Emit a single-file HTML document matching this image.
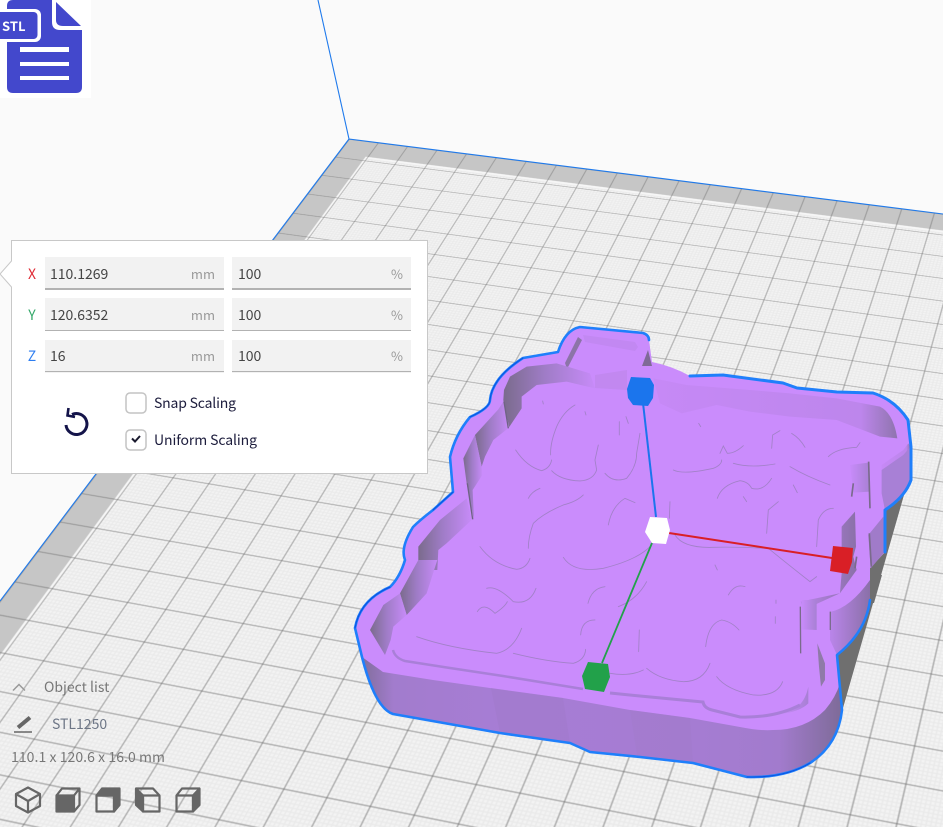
<!DOCTYPE html>
<html><head><meta charset="utf-8">
<style>
html,body{margin:0;padding:0;background:#fafafa;width:943px;height:827px;overflow:hidden;}
#v{position:relative;width:943px;height:827px;overflow:hidden;background:#fafafa;}
#plane{position:absolute;left:0;top:0;width:960px;height:900px;transform-origin:0 0;
transform:matrix3d(0.926,0.1067,0,-0.0001073,-0.5927,0.5227,0,-0.0004357,0,0,1,0,349,139,0,1);
background-color:#f3f3f3;
background-image:linear-gradient(#eaeaea 1px,transparent 1px),linear-gradient(90deg,#eaeaea 1px,transparent 1px);
background-size:3px 3px;}
.a{position:absolute;}
#b1{left:0;top:0;width:960px;height:27px;background:#f6f6f6;}
#b2{left:0;top:0;width:31px;height:900px;background:#f6f6f6;}
#s1{left:0;top:0;width:960px;height:24px;background:#c6c6c6;}
#s2{left:0;top:0;width:28px;height:900px;background:#c6c6c6;}
#g{left:0;top:0;width:960px;height:900px;
background-image:linear-gradient(rgba(110,110,110,.5) 1.3px,transparent 1.3px),linear-gradient(90deg,rgba(110,110,110,.5) 1.3px,transparent 1.3px);
background-size:30px 30px;}
svg{position:absolute;left:0;top:0;}
text{font-family:"Noto Sans CJK JP","Liberation Sans",sans-serif;font-size:14px;}
</style></head><body>
<div id="v">
<div id="plane"><div class="a" id="b1"></div><div class="a" id="b2"></div><div class="a" id="s1"></div><div class="a" id="s2"></div><div class="a" id="g"></div></div>
<svg width="943" height="827" viewBox="0 0 943 827">
<defs>
<linearGradient id="wf" gradientUnits="userSpaceOnUse" x1="360" y1="0" x2="842" y2="0">
<stop offset="0" stop-color="#7f6d98"/><stop offset=".07" stop-color="#a27ccd"/><stop offset=".3" stop-color="#a77dd5"/><stop offset=".7" stop-color="#a57cd2"/><stop offset=".87" stop-color="#a27bcd"/><stop offset="1" stop-color="#7e6b98"/></linearGradient>
<linearGradient id="wl" x1="0" y1="0" x2="1" y2="0"><stop offset="0" stop-color="#7a6b8c"/><stop offset=".45" stop-color="#9f7cc6"/><stop offset="1" stop-color="#c78bf8"/></linearGradient>
<linearGradient id="wr" x1="0" y1="0" x2="1" y2="0"><stop offset="0" stop-color="#ba85ea"/><stop offset="1" stop-color="#8a70a8"/></linearGradient>
<linearGradient id="wb" x1="0" y1="0" x2="1" y2="0"><stop offset="0" stop-color="#c689f6"/><stop offset=".85" stop-color="#bd86ec"/><stop offset="1" stop-color="#8f74ae"/></linearGradient>
<linearGradient id="wg" x1="0" y1="0" x2="1" y2="0"><stop offset="0" stop-color="#c88bfa"/><stop offset="1" stop-color="#a880d4"/></linearGradient>
</defs>

<!-- bed edges -->
<path d="M318 0L349 139L943 214M349 139L0 601" fill="none" stroke="#1f7aec" stroke-width="1.1"/>

<!-- shadow -->
<polygon points="906,488 843,708 836,655 870,600 870,568 885,552 885,510" fill="#6f6f6f"/>
<polygon points="872,575 882,575 874,603 868,603" fill="#6f6f6f"/>

<!-- silhouette -->
<path fill="#ca8cfc" d="M649 340L652 362Q672 366 690 376L723 375Q760 380 783 383L797 388L837 392L873 393Q895 400 908 420L911 447V480Q905 497 885 510V552L870 568V600Q866 632 837 655L842 710Q838 745 810 763Q785 778 747 777L693 763L640 757L590 752L570 743L500 733L393 714Q375 708 362 657L355 628Q360 600 390 587Q400 577 405 560Q400 548 413 527Q420 520 433 510L453 492L450 457Q455 435 470 417Q490 408 490 400Q492 378 523 358L558 352Q565 330 580 327L643 333Q649 335 649 340Z"/>

<!-- tab details -->
<polygon points="648,350 652,366 642,366" fill="#7f6a96"/>
<polygon points="578,337 565,363 567,369 582,340" fill="#8c74a8"/>
<path d="M583 335L635 342L638 347L635 351L585 342Z" fill="#c288f2"/>

<!-- front wall -->
<path fill="url(#wf)" d="M362 657L383 672L433 680L490 688L563 698L630 710L690 718L740 727Q760 731 773 730Q805 730 825 710Q836 697 840 683L842 710Q838 745 810 763Q785 778 747 777L693 763L640 757L590 752L570 743L500 733L393 714Q375 708 362 657Z"/>
<polygon fill="#9e78c6" opacity=".35" points="491,688 500,733 570,743 563,698"/>
<polygon fill="#a07ac9" opacity=".35" points="630,710 637,755 693,763 690,718"/>
<!-- right walls -->
<path fill="url(#wr)" d="M830 612Q850 608 870 580V600Q866 632 837 655L830 640Z"/>

<g transform="translate(640 360) scale(.3333)">
<polygon fill="url(#wb)" points="725,315 790,270 805,250 812,260 812,360 780,420 735,450 725,400"/>
<polygon fill="#a880d6" points="725,330 790,285 812,260 812,360 780,420 735,450 725,400"/>
<polygon fill="url(#wg)" points="630,315 685,308 690,395 640,398"/>
<polygon fill="#a07bc9" points="685,525 730,470 735,575 692,625"/>
<polygon fill="url(#wr)" points="605,500 645,455 648,560 640,590 650,630 600,700 482,725 490,750 600,700 605,640"/>
<path d="M686 305L690 445M640 370L635 410M688 520L694 620M650 590L645 625" fill="none" stroke="#7a6b8c" stroke-width="5"/>
</g>
<g transform="translate(640 580) scale(.3333)">
<polygon fill="url(#wg)" points="485,60 530,60 530,150 485,148"/>
<path d="M481 80L482 220M571 95V150" stroke="#7a6b8c" stroke-width="4"/>
<polygon fill="#8f7aa8" points="532,190 555,250 555,300 543,320 537,260"/>
<path fill="url(#wg)" d="M420 398Q490 395 505 320V370Q480 395 420 402Z"/>
</g>

<!-- inner walls -->
<g transform="translate(350 320) scale(.3333)">
<polygon fill="url(#wl)" points="460,240 462,210 480,170 530,140 620,130 720,160 735,205 650,185 560,195 515,230 515,265 475,325"/>
<polygon fill="url(#wl)" points="375,345 445,268 460,245 478,322 430,360 405,410 395,440"/>
<polygon fill="url(#wl)" points="340,415 375,345 395,440 397,465 368,510 372,600 350,490"/>
<polygon fill="url(#wl)" points="205,680 270,600 350,535 365,600 290,670 265,690 262,750 205,750"/>
<path d="M352 490L368 598M462 245L475 325" stroke="#6f6484" stroke-width="4"/>
</g>
<g transform="translate(350 560) scale(.3333)">
<polygon fill="url(#wl)" points="205,0 262,0 230,100 170,165 150,100"/>
<polygon fill="url(#wl)" points="60,210 100,135 150,100 170,165 130,200 122,240 105,285"/>
</g>
<polygon fill="#c288f0" points="595,375 627,370 627,390 595,388"/>
<g transform="translate(640 360) scale(.3333)">
<path fill="url(#wb)" d="M40 55L140 75L330 90L450 100L590 115L720 140Q760 160 772 235L720 230L590 180L450 170L330 155L230 135L125 160L60 130Z"/>
</g>

<!-- raised floor edge -->
<path d="M393 650Q395 658 405 661L450 668L503 676L583 689" fill="none" stroke="#a97fd8" stroke-width="2.5"/>
<path d="M610 693L640 696L703 702Q704 708 712 710L740 717Q775 718 800 705" fill="none" stroke="#a97fd8" stroke-width="3"/>

<!-- cracks -->
<g fill="none" stroke="#a281c8" stroke-width="2.6" stroke-linecap="round">
<g transform="translate(350 320) scale(.3333)">
<path d="M675 255Q640 275 620 320Q600 370 602 405M497 390Q530 440 575 452Q600 445 605 420M605 452Q630 480 690 483Q730 480 740 450L735 420L745 375M765 460Q790 490 830 475Q860 440 860 400L870 340M535 535Q545 515 570 505M700 525Q680 545 640 555Q580 580 550 610Q535 650 535 685M775 615Q785 560 825 535L855 548M390 680Q430 735 500 748Q530 745 540 715M640 712Q670 760 760 745Q860 720 900 680M808 305V345M828 290L835 310M705 275L708 285M578 243L580 252"/>
</g>
<g transform="translate(640 360) scale(.3333)">
<path d="M100 330Q130 345 220 325Q245 315 245 300M240 280L250 258L262 280Q285 280 310 257M280 310Q330 325 405 312M395 265L398 225L420 212M455 220Q480 235 495 262M565 290Q590 265 650 262L660 248M450 320Q500 350 570 375M232 415Q245 375 300 362Q325 365 335 385Q370 395 395 355M460 375L472 398M310 410L320 425M380 520L385 450L415 425M530 560L535 480Q550 445 580 445M90 425L88 475M105 525Q130 565 220 562Q280 560 380 565M385 565Q440 610 510 665L530 650M265 705Q285 670 315 680M225 615L232 630M176 190L182 200"/>
</g>
<g transform="translate(640 580) scale(.3333)">
<path d="M197 200Q205 130 245 120Q275 125 297 150M20 265Q60 300 130 305Q190 305 210 250M230 290Q260 330 340 345Q410 350 428 305M408 60V70M406 110V130"/>
</g>
<g transform="translate(350 560) scale(.3333)">
<path d="M410 85Q440 75 490 125Q540 135 558 85M382 155Q400 125 435 160Q465 140 472 125M714 130Q725 85 765 80M692 225Q695 180 735 180M200 230Q300 265 440 280Q490 270 515 205M490 280Q590 305 670 310Q705 300 707 268M868 210L866 275M805 140Q860 120 890 65M780 340Q840 350 880 330"/>
</g>
</g>

<!-- blue outline -->
<g fill="none" stroke-linejoin="round" stroke-linecap="round">
<path stroke="#1f7ffb" stroke-width="3" d="M690 376L723 375Q760 380 783 383L797 388L837 392L873 393Q895 400 908 420L911 447V480Q905 497 885 510V552"/>
<path stroke="#1f7ffb" stroke-width="2.6" d="M870 600Q866 632 837 655L842 710Q838 745 810 763Q785 778 747 777L693 763L640 757L590 752L570 743L500 733L393 714Q375 708 362 657L355 628Q360 600 390 587Q400 577 405 560Q400 548 413 527Q420 520 433 510L453 492L450 457Q455 435 470 417Q490 408 490 400Q492 378 523 358L558 352Q565 330 580 327L643 333Q649 335 649 340"/>
<path stroke="#0a50e0" stroke-width="1" d="M355 628Q360 600 390 587M433 510L453 492M470 417Q490 408 490 400Q492 378 523 358M747 777Q785 778 810 763"/>
</g>

<!-- gizmo -->
<path d="M643 403L656 517" stroke="#1b75ed" stroke-width="2"/>
<path d="M669 533L832 558" stroke="#d91f26" stroke-width="2"/>
<path d="M652 543L602 663" stroke="#22a14a" stroke-width="1.8"/>
<polygon fill="#1b75ed" points="631,377 650,378 654,385 653,398 648,406 633,405 628,398 627,389"/>
<polygon fill="#ffffff" points="650,517 667,518 670,530 666,544 652,543 645,532"/>
<polygon fill="#d91f26" points="833,546 853,548 852,562 848,574 830,571"/>
<polygon fill="#22a14a" points="588,662 608,664 610,677 604,692 585,689 582,676"/>

<!-- panel -->
<rect x="11.5" y="240.500" width="416" height="233" fill="#fff" stroke="#c8c8c8"/>
<polygon points="0,274 12,261 12,287" fill="#fff"/>
<path d="M11.500 261L0 274L11.500 287" fill="none" stroke="#c8c8c8"/>
<g fill="#f2f2f2">
<rect x="45" y="257" width="179" height="33"/><rect x="232" y="257" width="179" height="33"/>
<rect x="45" y="298" width="179" height="33"/><rect x="232" y="298" width="179" height="33"/>
<rect x="45" y="340" width="179" height="33"/><rect x="232" y="340" width="179" height="33"/>
</g>
<g fill="#b2b2b2">
<rect x="45" y="288" width="179" height="2"/><rect x="232" y="288" width="179" height="2"/>
<rect x="45" y="330" width="179" height="1"/><rect x="232" y="330" width="179" height="1"/>
<rect x="45" y="371" width="179" height="1"/><rect x="232" y="371" width="179" height="1"/>
</g>
<text x="32" y="279" text-anchor="middle" fill="#e02b35">X</text>
<text x="32" y="320" text-anchor="middle" fill="#35a86a">Y</text>
<text x="32" y="361" text-anchor="middle" fill="#2d7df0">Z</text>
<g fill="#444">
<text x="50" y="279">110.1269</text><text x="50" y="320">120.6352</text><text x="50" y="361">16</text>
<text x="238" y="279">100</text><text x="238" y="320">100</text><text x="238" y="361">100</text>
</g>
<g fill="#999" style="font-size:13px">
<text x="215" y="279" text-anchor="end" style="font-size:13px">mm</text><text x="215" y="320" text-anchor="end" style="font-size:13px">mm</text><text x="215" y="361" text-anchor="end" style="font-size:13px">mm</text>
<text x="403" y="279" text-anchor="end" style="font-size:13px">%</text><text x="403" y="320" text-anchor="end" style="font-size:13px">%</text><text x="403" y="361" text-anchor="end" style="font-size:13px">%</text>
</g>
<rect x="126" y="393" width="20" height="20" rx="4" fill="#fff" stroke="#c4c4c4" stroke-width="1.5"/>
<rect x="126" y="430" width="20" height="20" rx="4" fill="#fff" stroke="#c4c4c4" stroke-width="1.5"/>
<path d="M132 438.500L135 441.500L140 436" fill="none" stroke="#1a1a2e" stroke-width="2"/>
<text x="154" y="408" fill="#1c1c3c" textLength="82">Snap Scaling</text>
<text x="154" y="445" fill="#1c1c3c" textLength="103">Uniform Scaling</text>
<path d="M72 414.500A10.500 10.500 0 1 1 66 425" fill="none" stroke="#14144a" stroke-width="3"/>
<path d="M68.500 408L67.500 415.500L75 417" fill="none" stroke="#14144a" stroke-width="2.600"/>

<!-- bottom-left -->
<path d="M13 690.500L19 684.500L25 690.500" fill="none" stroke="#999" stroke-width="1.500"/>
<text x="44" y="692" fill="#777">Object list</text>
<path d="M14 732H32" stroke="#666" stroke-width="1.600"/>
<path d="M18 727.500L30 717.500" stroke="#666" stroke-width="4"/>
<text x="52" y="729" fill="#6d7686">STL1250</text>
<text x="11" y="762" fill="#777" textLength="154">110.1 x 120.6 x 16.0 mm</text>

<g fill="none" stroke="#666" stroke-width="2.200" stroke-linejoin="round">
<path d="M28 787.500L40 794V806L28 812.500L16 806V794ZM16 794L28 801L40 794M28 801V812.500"/>
<path d="M56.500 795.500L62 788.500H79.500V805L74 811.500M74 795.500L79.500 788.500"/>
<path fill="#666" d="M56.500 795.500H74V811.500H56.500Z"/>
<path d="M96.500 795.500H114V811.500H96.500Z"/>
<path fill="#666" d="M96.500 795.500L102 788.500H119.500V805L114 811.500V795.500Z"/>
<path d="M143 795.500H159.500V811.500H143ZM136 788.500H153L159.500 795.500"/>
<path fill="#666" d="M136 788.500L143 795.500V811.500L136 805Z"/>
<path d="M176.500 795.500H193V811.500H176.500ZM176.500 795.500L182 788.500H199.500"/>
<path fill="#666" d="M193 795.500L199.500 788.500V805L193 811.500Z"/>
</g>

<!-- STL icon -->
<rect x="0" y="0" width="91" height="98" fill="#fff"/>
<path d="M13 0H52V22Q52 30 60 30H82V87Q82 93 76 93H13Q7 93 7 87V6Q7 0 13 0Z" fill="#4348cc"/>
<path d="M56 2L81 26H63Q56 26 56 20Z" fill="#4348cc"/>
<rect x="-6" y="9" width="47" height="33" rx="6" fill="#fff"/>
<rect x="-6" y="12" width="43.500" height="27" rx="4" fill="#4348cc"/>
<text x="2" y="31" fill="#fff" style="font-size:13px;font-weight:700">STL</text>
<g fill="#fff"><rect x="20" y="47" width="49" height="5"/><rect x="20" y="62" width="49" height="4"/><rect x="20" y="76" width="49" height="4"/></g>
</svg>
</div>
</body></html>
